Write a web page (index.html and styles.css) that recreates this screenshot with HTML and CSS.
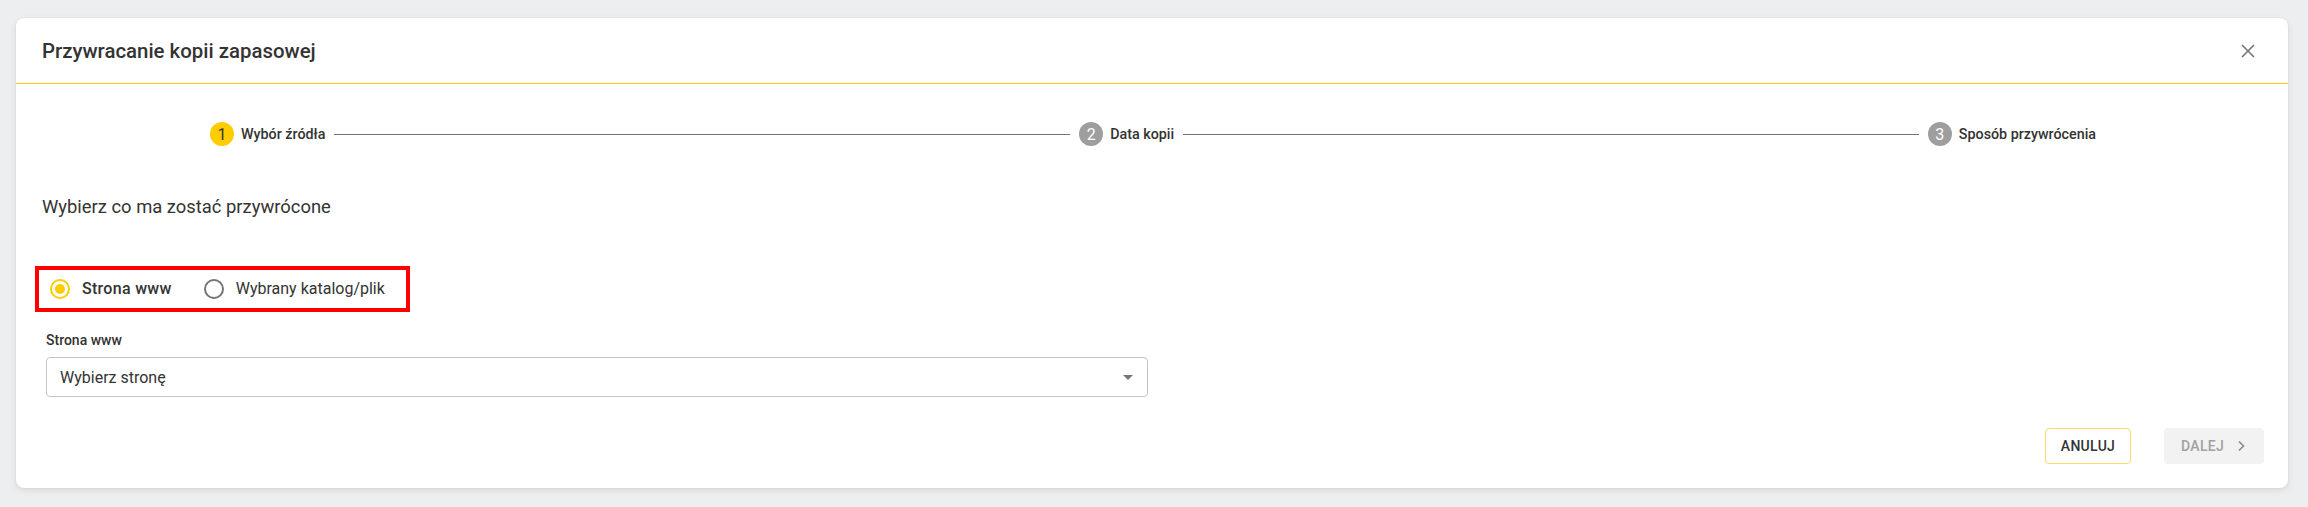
FILE: index.html
```html
<!DOCTYPE html>
<html lang="pl">
<head>
<meta charset="utf-8">
<title>Przywracanie kopii zapasowej</title>
<link rel="stylesheet" href="styles.css">
</head>
<body>
<div class="dialog">
  <div class="dialog-header">
    <h1 class="dialog-title">Przywracanie kopii zapasowej</h1>
    <button class="close-btn" aria-label="Zamknij">
      <svg width="16" height="16" viewBox="0 0 16 16"><path d="M2 2 L14 14 M14 2 L2 14" stroke="#757575" stroke-width="1.6" fill="none"/></svg>
    </button>
  </div>
  <div class="dialog-body">
    <div class="stepper">
      <div class="step active"><span class="step-num">1</span><span class="step-label">Wybór źródła</span></div>
      <div class="step-line"></div>
      <div class="step"><span class="step-num">2</span><span class="step-label">Data kopii</span></div>
      <div class="step-line"></div>
      <div class="step"><span class="step-num">3</span><span class="step-label">Sposób przywrócenia</span></div>
    </div>
    <p class="question">Wybierz co ma zostać przywrócone</p>
    <div class="radio-group">
      <label class="radio checked"><span class="radio-dot"></span><span class="radio-label">Strona www</span></label>
      <label class="radio"><span class="radio-dot"></span><span class="radio-label">Wybrany katalog/plik</span></label>
    </div>
    <div class="field">
      <div class="field-label">Strona www</div>
      <div class="select">
        <span class="select-value">Wybierz stronę</span>
        <svg class="select-arrow" width="10" height="5" viewBox="0 0 10 5"><path d="M0 0 L10 0 L5 5 Z" fill="#757575"/></svg>
      </div>
    </div>
  </div>
  <div class="dialog-footer">
    <button class="btn btn-outline">ANULUJ</button>
    <button class="btn btn-disabled">DALEJ
      <svg width="8" height="12" viewBox="0 0 8 12"><path d="M2 1.5 L6.5 6 L2 10.5" stroke="#8a8a8a" stroke-width="1.6" fill="none"/></svg>
    </button>
  </div>
</div>
</body>
</html>
```
FILE: styles.css
```css
* { box-sizing: border-box; }
html, body { margin: 0; padding: 0; }
body {
  background: #eceef0;
  font-family: Roboto, "Liberation Sans", Arial, sans-serif;
  color: #333333;
  height: 507px;
  overflow: hidden;
}
.dialog {
  margin: 18px 20px 0 16px;
  background: #ffffff;
  border-radius: 8px;
  box-shadow: 0 2px 6px rgba(0,0,0,0.10), 0 0 2px rgba(0,0,0,0.06);
}
.dialog-header {
  height: 66px;
  border-bottom: 1px solid #fcca00;
  display: flex;
  align-items: center;
  justify-content: space-between;
  padding: 0 32px 0 26px;
}
.dialog-title {
  margin: 0;
  font-size: 20.4px;
  font-weight: 500;
  color: #333;
}
.close-btn {
  border: 0;
  background: none;
  padding: 0;
  width: 16px;
  height: 16px;
  display: flex;
  cursor: pointer;
}
.dialog-body {
  padding: 38px 26px 0 26px;
}
.stepper {
  display: flex;
  align-items: center;
  margin: 0 166px 0 168px;
  height: 24px;
}
.step {
  display: flex;
  align-items: center;
  gap: 7px;
}
.step-num {
  width: 24px;
  height: 24px;
  border-radius: 50%;
  background: #9e9e9e;
  color: #fff;
  font-size: 16px;
  display: flex;
  align-items: center;
  justify-content: center;
}
.step.active .step-num {
  background: #ffcc00;
  color: #333;
}
.step-label {
  font-size: 14.3px;
  font-weight: 500;
  color: #333;
}
.step-line {
  flex: 1;
  height: 1px;
  background: #757575;
  margin: 0 9px;
}
.question {
  margin: 49px 0 0 0;
  font-size: 18.4px;
  line-height: 24px;
  color: #333;
}
.radio-group {
  display: inline-flex;
  align-items: center;
  margin: 47px 0 0 -7px;
  border: 4px solid #ff0000;
  padding: 9px 21px 9px 11px;
  gap: 32px;
}
.radio {
  display: flex;
  align-items: center;
  gap: 12px;
  cursor: pointer;
}
.radio-dot {
  width: 20px;
  height: 20px;
  border-radius: 50%;
  border: 2px solid #757575;
  display: flex;
  align-items: center;
  justify-content: center;
}
.radio.checked .radio-dot {
  border-color: #ffcc00;
}
.radio.checked .radio-dot::after {
  content: "";
  width: 10px;
  height: 10px;
  border-radius: 50%;
  background: #ffcc00;
}
.radio-label {
  font-size: 16px;
  line-height: 20px;
  color: #333;
}
.radio.checked .radio-label {
  font-weight: 500;
  letter-spacing: 0.3px;
}
.field {
  margin: 18px 0 0 4px;
  width: 1102px;
}
.field-label {
  font-size: 14px;
  line-height: 20px;
  font-weight: 500;
  color: #333;
}
.select {
  margin-top: 7px;
  height: 40px;
  border: 1px solid #c4c4c4;
  border-radius: 4px;
  display: flex;
  align-items: center;
  justify-content: space-between;
  padding: 0 14px 0 13px;
}
.select-value {
  font-size: 16px;
  color: #333;
}
.dialog-footer {
  display: flex;
  justify-content: flex-end;
  gap: 33px;
  padding: 31px 24px 24px 24px;
}
.btn {
  height: 36px;
  border-radius: 4px;
  font-family: inherit;
  font-size: 14px;
  font-weight: 500;
  letter-spacing: 0.3px;
  display: flex;
  align-items: center;
  cursor: pointer;
}
.btn-outline {
  width: 86px;
  justify-content: center;
  background: #fff;
  border: 1px solid #fcd968;
  color: #333;
}
.btn-disabled {
  width: 100px;
  border: 0;
  background: #f2f2f2;
  color: #a0a0a0;
  padding: 0 0 0 17px;
  gap: 13px;
}
```
